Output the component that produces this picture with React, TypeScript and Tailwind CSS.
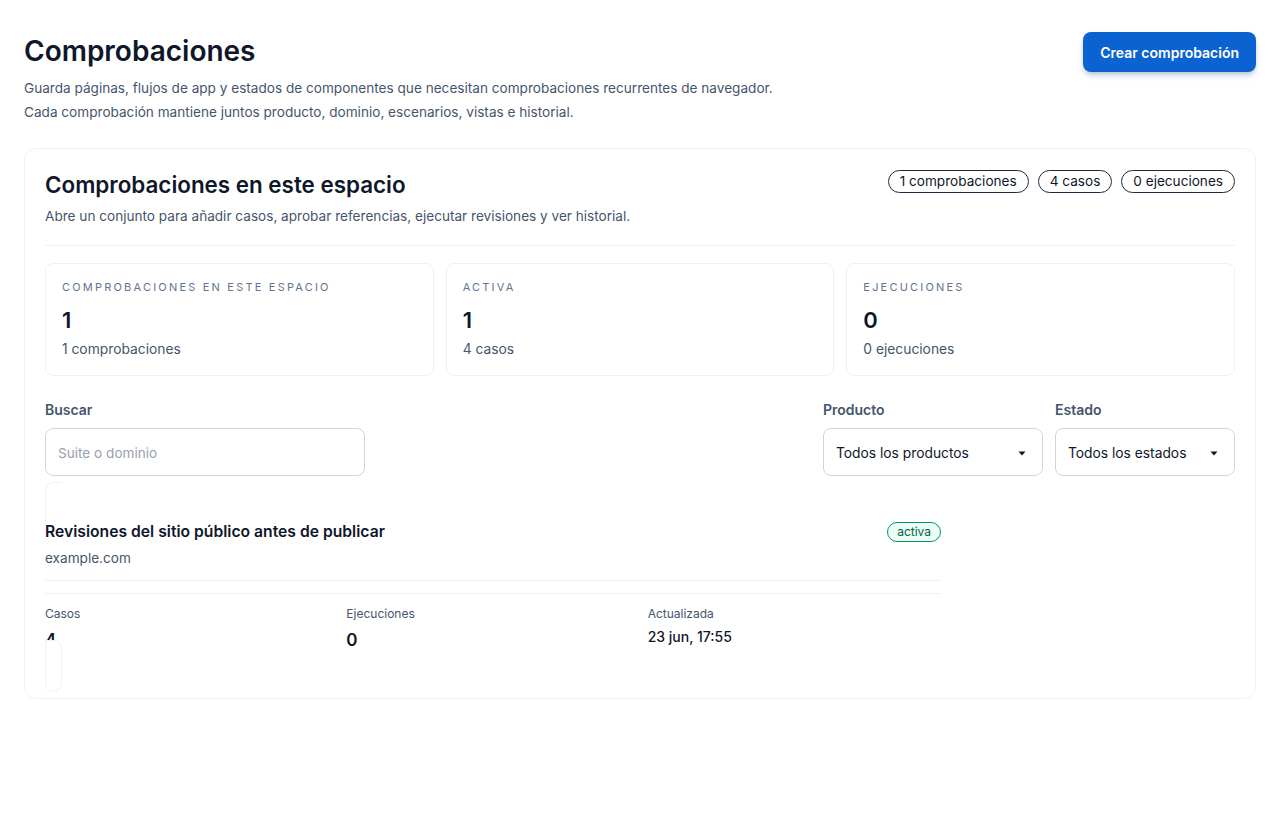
import React from 'react';

const stats = [
  { label: 'Comprobaciones en este espacio', value: '1', note: '1 comprobaciones' },
  { label: 'Activa', value: '1', note: '4 casos' },
  { label: 'Ejecuciones', value: '0', note: '0 ejecuciones' },
];

const pills = ['1 comprobaciones', '4 casos', '0 ejecuciones'];

const Caret: React.FC = () => (
  <svg width="8" height="5" viewBox="0 0 8 5" className="text-slate-900">
    <path d="M0.5 0.5h7L4 4.5z" fill="currentColor" />
  </svg>
);

const SelectBox: React.FC<{ label: string; value: string; width: string }> = ({ label, value, width }) => (
  <div className={`flex flex-col gap-2 ${width}`}>
    <span className="text-sm font-semibold text-slate-600 leading-5">{label}</span>
    <div className="h-12 rounded-lg border border-gray-300 bg-white px-3 pt-[2px] flex items-center justify-between text-[13.8px] text-slate-900">
      <span>{value}</span>
      <span className="pr-1"><Caret /></span>
    </div>
  </div>
);

export default function App() {
  return (
    <div className="min-h-screen bg-white px-6 pt-8 text-slate-900" style={{ fontFamily: 'Inter, "Noto Sans", sans-serif' }}>
      {/* Page header */}
      <div className="flex items-start justify-between">
        <div>
          <h1 className="mt-[1px] text-[28px] font-semibold leading-9 text-slate-900">Comprobaciones</h1>
          <p className="mt-[7px] text-[13.6px] leading-6 text-slate-600">
            Guarda páginas, flujos de app y estados de componentes que necesitan comprobaciones recurrentes de navegador.
          </p>
          <p className="text-[13.6px] leading-6 text-slate-600">
            Cada comprobación mantiene juntos producto, dominio, escenarios, vistas e historial.
          </p>
        </div>
        <button className="h-10 rounded-lg bg-[#0b63d1] px-[17px] pt-[2px] text-sm font-semibold text-white shadow-md shadow-slate-400/50">
          Crear comprobación
        </button>
      </div>

      {/* Suites panel */}
      <div className="mt-6 h-[551px] rounded-xl border border-[#edf1f7] bg-white px-5 pt-5">
        <div className="flex items-start justify-between">
          <div>
            <h2 className="text-[22.4px] font-semibold leading-8 text-slate-900">Comprobaciones en este espacio</h2>
            <p className="mt-[5px] text-[13.6px] leading-5 text-slate-600">
              Abre un conjunto para añadir casos, aprobar referencias, ejecutar revisiones y ver historial.
            </p>
          </div>
          <div className="mt-[1px] flex gap-[9px]">
            {pills.map((p) => (
              <span key={p} className="rounded-full border border-slate-800 px-[11px] text-[13.6px] leading-[21px] text-slate-900">
                {p}
              </span>
            ))}
          </div>
        </div>

        <div className="mt-[19px] border-t border-[#eef1f6]" />

        <div className="mt-[17px] grid grid-cols-3 gap-3">
          {stats.map((s) => (
            <div key={s.label} className="h-[113px] rounded-lg border border-[#edf1f7] px-4 pt-[13px]">
              <div className="text-[11px] uppercase tracking-[0.2em] leading-5 text-slate-500">{s.label}</div>
              <div className="mt-[7px] text-[22px] font-semibold leading-8 text-slate-900">{s.value}</div>
              <div className="mt-[3px] text-[13.8px] leading-5 text-slate-600">{s.note}</div>
            </div>
          ))}
        </div>

        {/* Filters */}
        <div className="mt-6 flex items-end justify-between">
          <div className="flex w-80 flex-col gap-2">
            <span className="text-sm font-semibold leading-5 text-slate-600">Buscar</span>
            <input
              placeholder="Suite o dominio"
              className="h-12 rounded-lg border border-gray-300 px-3 pt-[2px] text-[13.6px] text-slate-900 placeholder:text-gray-400 outline-none"
            />
          </div>
          <div className="flex gap-3">
            <SelectBox label="Producto" value="Todos los productos" width="w-[220px]" />
            <SelectBox label="Estado" value="Todos los estados" width="w-[180px]" />
          </div>
        </div>

        {/* Suite list */}
        <div className="relative mt-[6px] w-[896px]">
          <div className="absolute left-0 top-0 h-[40px] w-[17px] rounded-tl-lg border-l border-t border-[#edf1f7]" />
          <div className="pt-[38px]">
            <div className="flex items-center justify-between">
              <h3 className="text-[15.7px] font-semibold leading-6 text-slate-900">Revisiones del sitio público antes de publicar</h3>
              <span className="rounded-full border border-emerald-600 bg-emerald-50 px-[9px] text-xs leading-[18px] text-emerald-800">activa</span>
            </div>
            <p className="mt-[4px] text-[13.6px] leading-5 text-slate-600">example.com</p>
            <div className="mt-[12px] border-t border-[#eef2f8]" />
            <div className="mt-3 border-t border-[#eef2f8]" />
            <div className="mt-[10px] grid grid-cols-3 gap-2">
              <div>
                <div className="text-xs leading-5 text-slate-600">Casos</div>
                <div className="mt-[4px] text-[17px] font-semibold leading-6 text-slate-900">4</div>
              </div>
              <div>
                <div className="text-xs leading-5 text-slate-600">Ejecuciones</div>
                <div className="mt-[4px] text-[17px] font-semibold leading-6 text-slate-900">0</div>
              </div>
              <div>
                <div className="text-xs leading-5 text-slate-600">Actualizada</div>
                <div className="mt-[3px] text-sm font-medium leading-5 text-slate-900">23 jun, 17:55</div>
              </div>
            </div>
          </div>
          <div className="absolute left-0 top-[158px] h-[52px] w-[17px] rounded-b-lg rounded-tr-lg border border-[#edf1f7] bg-white" />
        </div>
      </div>
    </div>
  );
}
